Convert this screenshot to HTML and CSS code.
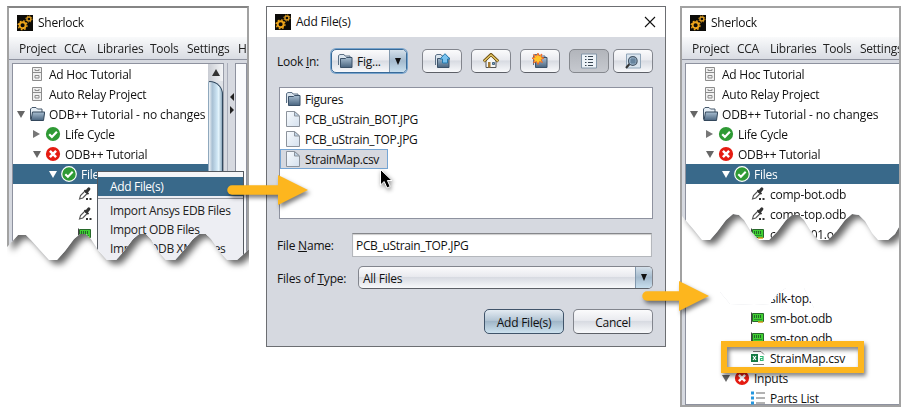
FILE: index.html
```html
<!DOCTYPE html>
<html lang="en">
<head>
<meta charset="utf-8">
<title>Sherlock - Add File(s)</title>
<link rel="stylesheet" href="styles.css">
</head>
<body>
<svg class="defs" aria-hidden="true">
  <defs>
    <linearGradient id="gf" x1="0" y1="0" x2="0" y2="1"><stop offset="0" stop-color="#a9bfd2"/><stop offset="1" stop-color="#49647f"/></linearGradient>
    <linearGradient id="gp" x1="0" y1="0" x2="1" y2="1"><stop offset="0" stop-color="#f8fbfe"/><stop offset="1" stop-color="#d5e1ee"/></linearGradient>
    <symbol id="gears" viewBox="0 0 16 16"><rect width="16" height="16" fill="#0c0b08"/><circle cx="5.6" cy="10.3" r="3" fill="none" stroke="#eda51b" stroke-width="1.9"/><circle cx="5.6" cy="10.3" r="4.4" fill="none" stroke="#eda51b" stroke-width="1.3" stroke-dasharray="1.7 1.75"/><circle cx="11.9" cy="4" r="2" fill="none" stroke="#d99a20" stroke-width="1.4"/><circle cx="11.9" cy="4" r="3.1" fill="none" stroke="#d99a20" stroke-width="1" stroke-dasharray="1.2 1.23"/></symbol>
    <symbol id="cabinet" viewBox="0 0 16 16"><path d="M3.5 1.5h9v13h-9z" fill="#f0f0f0" stroke="#8c8c8c"/><path d="M3.5 6.5h9M6 3v1.5h4V3M6 9.500h4v2.500H6z" fill="none" stroke="#8c8c8c"/></symbol>
    <symbol id="folder" viewBox="0 0 16 16"><path d="M1.500 13.500V3L3 1.500h4L8.500 3H13v3" fill="#e4edf5" stroke="#46586b"/><path d="M2 14.500L3.500 6h12.200L14.500 14.500z" fill="url(#gf)" stroke="#33475b"/></symbol>
    <symbol id="closed" viewBox="0 0 16 16"><path d="M1.500 12V2.500L3 1.500h4L8 3h5v2" fill="#dbe5ee" stroke="#5c7085"/><path d="M3.500 14.500v-9h5l1-1h5.500v10z" fill="url(#gf)" stroke="#3b5168"/></symbol>
    <symbol id="ok" viewBox="0 0 16 16"><circle cx="8" cy="8" r="7.100" fill="#2f9a35"/><path d="M4.200 8.200l2.700 2.700 5-5.200" fill="none" stroke="#fff" stroke-width="2.200"/></symbol>
    <symbol id="okring" viewBox="0 0 16 16"><circle cx="8" cy="8" r="7.300" fill="#2f9a35" stroke="#fff" stroke-width="1.200"/><path d="M4.300 8.200l2.600 2.600 4.800-5" fill="none" stroke="#fff" stroke-width="2"/></symbol>
    <symbol id="bad" viewBox="0 0 16 16"><circle cx="8" cy="8" r="7.100" fill="#e51c12"/><path d="M4.900 4.900l6.200 6.200M11.100 4.900l-6.200 6.200" stroke="#fff" stroke-width="2.500"/></symbol>
    <symbol id="picker" viewBox="0 0 16 16"><path d="M8.500 4.500L3.500 9.500 2.500 13l3.300-1L10.700 7" fill="#fff" stroke="#555" stroke-width="1.100"/><path d="M7.500 4.200l4 4" stroke="#333" stroke-width="1.800"/><path d="M9.500 5.800l2.300-2.800" stroke="#333" stroke-width="3.200" stroke-linecap="round"/><path d="M9 12h2v2H9zM12.500 12h2v2h-2z" fill="#333"/></symbol>
    <symbol id="board" viewBox="0 0 16 16"><path d="M1.500 14V2.500" stroke="#444"/><path d="M2.500 3.500h11v8h-11z" fill="#3fd032" stroke="#27682a"/><path d="M4.500 5v3M6.500 5v3M8.500 5v3M10.500 5v3" stroke="#24652b"/><path d="M4 9.500h8" stroke="#298c2b"/><path d="M8 12h5" stroke="#d5a61d" stroke-width="1.500"/></symbol>
    <symbol id="sheet" viewBox="0 0 16 16"><path d="M3 1.500h8l3 3M3 14.500h11" fill="none" stroke="#777"/><path d="M1 4h7v8H1z" fill="#147a43"/><path d="M3 6l3 4M6 6l-3 4" stroke="#fff" stroke-width="1.200"/><path d="M10 6.500h3v4h-2.500v-2H13" fill="none" stroke="#2eb872" stroke-width="1.200"/></symbol>
    <symbol id="parts" viewBox="0 0 16 16"><path d="M1 1.500h3v3H1zM1 6.500h3v3H1zM1 11.500h3v3H1z" fill="#2597df"/><path d="M6 3h9M6 8h9M6 13h9" stroke="#666"/></symbol>
    <symbol id="page" viewBox="0 0 16 16"><path d="M1.500 .5h8L14.500 5v10.500h-13z" fill="url(#gp)" stroke="#8c939c"/><path d="M9.500 .5V5h5z" fill="#c0d4e6" stroke="#8c939c"/></symbol>
  </defs>
</svg>
<main class="stage">
  <section class="app app-left">
    <div class="torn-shadow"><div class="torn torn-left">
      <header class="title"><svg><use href="#gears"/></svg>Sherlock</header>
      <nav class="menu"><span>Project</span><span>CCA</span><span>Libraries</span><span>Tools</span><span>Settings</span><span>H</span></nav>
      <div class="work">
        <div class="tree">
          <div class="row"><i></i><svg><use href="#cabinet"/></svg><span>Ad Hoc Tutorial</span></div>
          <div class="row"><i></i><svg><use href="#cabinet"/></svg><span>Auto Relay Project</span></div>
          <div class="row"><i class="open"></i><svg><use href="#folder"/></svg><span class="long">ODB++ Tutorial - no changes</span></div>
          <div class="row l1"><i class="shut"></i><svg><use href="#ok"/></svg><span>Life Cycle</span></div>
          <div class="row l1"><i class="open"></i><svg><use href="#bad"/></svg><span>ODB++ Tutorial</span></div>
          <div class="row l2 sel"><i class="open"></i><svg><use href="#okring"/></svg><span>Files</span></div>
          <div class="row l3"><i></i><svg><use href="#picker"/></svg></div>
          <div class="row l3"><i></i><svg><use href="#picker"/></svg></div>
          <div class="row l3"><i></i><svg><use href="#board"/></svg></div>
          <div class="row"></div>
        </div>
        <div class="scroll"><div class="up"><i></i></div><div class="thumb"></div></div>
        <div class="split"><i class="toleft"></i><i class="toright"></i></div>
        <div class="pane"></div>
      </div>
      <div class="popup">
        <div class="gap"></div><div class="item on">Add File(s)</div><hr>
        <div class="item">Import Ansys EDB Files</div><div class="item">Import ODB Files</div><div class="item">Import ODB XML Files</div>
      </div>
    </div></div>
  </section>

  <section class="dialog">
    <header class="title"><svg><use href="#gears"/></svg><span>Add File(s)</span><svg class="close" viewBox="0 0 10 10"><path d="M0 0l10 10M10 0L0 10" stroke="#111" stroke-width="1.100"/></svg></header>
    <div class="look">
      <label>Look <u>I</u>n:</label>
      <div class="combo small"><svg><use href="#closed"/></svg><span>Fig...</span><b><i></i></b></div>
      <button><svg viewBox="0 0 16 16"><use href="#closed"/><path d="M8.500 10V6H6L11 .7 16 6h-2.500v4z" fill="#79c2ef" stroke="#2478ac"/></svg></button>
      <button><svg viewBox="0 0 16 16"><path d="M3 8v6.500h10V8L8 3z" fill="#f5f6f5" stroke="#555"/><path d="M.7 8.500L8 1.500l7.300 7" fill="none" stroke="#705316" stroke-width="3"/><path d="M1 8.200L8 1.700l7 6.500" fill="none" stroke="#edce6b" stroke-width="1.200"/><path d="M5 9h2.500v5.500H5z" fill="#a67c34"/><path d="M9.500 9.500h2v2h-2z" fill="#79a5c6" stroke="#4a6780"/></svg></button>
      <button><svg viewBox="0 0 16 16"><use href="#closed"/><path d="M6 0l1 3 3-2-1 3 3 1-3 1.500 1.500 3-3-1L6 11.500 4.500 8.500l-3 1.500 1-3L0 5l3-.5L1.500 1.500l3 1.500z" fill="#ffc72a" stroke="#ee5a24" stroke-width=".8"/></svg></button>
      <button class="down"><svg viewBox="0 0 16 16"><path d="M.5 1h15v14H.5z" fill="#edf3f8" stroke="#8396a8"/><path d="M4 3.500h1.500M7 3.500h5M4 6.500h1.500M7 6.500h5M4 9.500h1.500M7 9.500h5M4 12.500h1.500M7 12.500h5" stroke="#384652"/></svg></button>
      <button class="near"><svg viewBox="0 0 16 16"><path d="M1.500 1h14v14h-14z" fill="#dae5ef" stroke="#91a6b9"/><path d="M4.500 11L1 15" stroke="#333" stroke-width="2"/><circle cx="7.800" cy="8" r="4.300" fill="#a5bfd5" stroke="#435465" stroke-width="1.200"/><path d="M5 7h6M5 9h6M7 5v6M9 5v6" stroke="#53708b"/></svg></button>
    </div>
    <div class="files">
      <div class="file"><svg><use href="#closed"/></svg><span>Figures</span></div>
      <div class="file"><svg><use href="#page"/></svg><span>PCB_uStrain_BOT.JPG</span></div>
      <div class="file"><svg><use href="#page"/></svg><span>PCB_uStrain_TOP.JPG</span></div>
      <div class="file picked"><svg><use href="#page"/></svg><span>StrainMap.csv</span></div>
    </div>
    <div class="line name"><label>File <u>N</u>ame:</label><div class="field">PCB_uStrain_TOP.JPG</div></div>
    <div class="line type"><label>Files of <u>T</u>ype:</label><div class="combo"><span>All Files</span><b><i></i></b></div></div>
    <footer><button class="primary">Add File(s)</button><button>Cancel</button></footer>
  </section>

  <section class="app app-right">
    <div class="torn-shadow"><div class="torn torn-right">
      <header class="title"><svg><use href="#gears"/></svg>Sherlock</header>
      <nav class="menu"><span>Project</span><span>CCA</span><span>Libraries</span><span>Tools</span><span>Settings</span></nav>
      <div class="work">
        <div class="tree">
          <div class="row"><i></i><svg><use href="#cabinet"/></svg><span>Ad Hoc Tutorial</span></div>
          <div class="row"><i></i><svg><use href="#cabinet"/></svg><span>Auto Relay Project</span></div>
          <div class="row"><i class="open"></i><svg><use href="#folder"/></svg><span class="long">ODB++ Tutorial - no changes</span></div>
          <div class="row l1"><i class="shut"></i><svg><use href="#ok"/></svg><span>Life Cycle</span></div>
          <div class="row l1"><i class="open"></i><svg><use href="#bad"/></svg><span>ODB++ Tutorial</span></div>
          <div class="row l2 sel"><i class="open"></i><svg><use href="#okring"/></svg><span>Files</span></div>
          <div class="row l3"><i></i><svg><use href="#picker"/></svg><span>comp-bot.odb</span></div>
          <div class="row l3"><i></i><svg><use href="#picker"/></svg><span>comp-top.odb</span></div>
          <div class="row l3"><i></i><svg><use href="#board"/></svg><span>comp-001.odb</span></div>
        </div>
      </div>
    </div></div>
    <div class="lower">
      <div class="tree">
        <div class="row l3"><i></i><svg><use href="#board"/></svg><span>silk-top.</span></div>
        <div class="row l3"><i></i><svg><use href="#board"/></svg><span>sm-bot.odb</span></div>
        <div class="row l3"><i></i><svg><use href="#board"/></svg><span>sm-top.odb</span></div>
        <div class="row l3"><i></i><svg><use href="#sheet"/></svg><span>StrainMap.csv</span></div>
        <div class="row l2"><i class="open"></i><svg><use href="#bad"/></svg><span>Inputs</span></div>
        <div class="row l3"><i></i><svg><use href="#parts"/></svg><span>Parts List</span></div>
      </div>
    </div>
  </section>

  <svg class="marks" viewBox="0 0 907 414">
    <g class="orange">
      <path d="M232 190h48" stroke-width="9.500" stroke-linecap="round"/><path class="head" d="M278 175v30l30-15z"/>
      <path d="M647 296h34" stroke-width="9.500" stroke-linecap="round"/><path class="head" d="M679 281v30l30-15z"/>
      <rect x="724" y="344" width="137" height="26" stroke-width="6"/>
    </g>
    <path class="cursor" d="M380.500 169.500v15.500l3.700-3.500 2.800 6.500 3.200-1.500-2.800-6h4.600z"/>
  </svg>
</main>
</body>
</html>
```
FILE: styles.css
```css
* { box-sizing: border-box; }
body { margin: 0; background: #fff; font: 12px/20px "Open Sans", "Noto Sans", sans-serif; letter-spacing: -0.25px; color: #111; overflow: hidden; }
.defs { position: absolute; width: 0; height: 0; }
svg { display: block; flex: none; width: 16px; height: 16px; }
.stage { position: relative; display: flex; align-items: flex-start; width: 907px; height: 414px; padding: 6px 0 0 7px; }
.app { position: relative; overflow: hidden; height: 401px; flex: none; }
.app-left { width: 242px; height: 270px; }
.app-right { width: 221px; margin-left: 14px; border: 2px solid #a2a2a2; }
.torn-shadow { filter: drop-shadow(5px 4px 3px rgba(0,0,0,.6)); }
.torn { position: relative; background: #d6d9e0; }
.torn-left { height: 256px; border: 2px solid #a2a2a2; border-top-color: #858585; border-bottom: 0;
  clip-path: polygon(0 0, 242px 0, 242px 243px, 238px 247px, 230px 254px, 220px 254px, 212px 245px, 204px 233px, 199px 228px, 192px 228px, 186px 233px, 177px 244px, 168px 254px, 159px 254px, 151px 245px, 144px 233px, 139px 228px, 132px 228px, 126px 233px, 117px 245px, 109px 254px, 100px 254px, 91px 244px, 84px 233px, 79px 228px, 73px 228px, 67px 233px, 58px 245px, 50px 254px, 42px 254px, 32px 243px, 24px 234px, 19px 229px, 11px 229px, 0 241px); }
.torn-right { height: 236px;
  clip-path: polygon(0 0, 217px 0, 217px 219px, 213px 226px, 206px 232px, 196px 232px, 190px 225px, 183px 213px, 177px 207px, 170px 206px, 163px 212px, 154px 224px, 146px 232px, 136px 232px, 128px 222px, 122px 212px, 117px 207px, 110px 207px, 104px 212px, 95px 224px, 87px 232px, 77px 232px, 68px 222px, 62px 212px, 57px 207px, 51px 206px, 44px 212px, 35px 224px, 28px 232px, 20px 232px, 12px 222px, 0 208px); }
.title { display: flex; align-items: center; gap: 5px; height: 30px; padding-left: 8px; background: #fff; }
.app .title { height: 29px; }
.menu { display: grid; grid-template-columns: 45px 33px 53px 37px 51px 20px; height: 23px; padding-left: 10px; background: linear-gradient(#f9fafb, #d9dce3); border-bottom: 1px solid #8e929f; white-space: nowrap; line-height: 24px; color: #222; }
.work { display: flex; height: 210px; padding: 3px 0 0 3px; }
.tree { flex: none; background: #fff; border: 1px solid #8e929f; border-right: 0; width: 196px; white-space: nowrap; }
.app-right .tree { width: 214px; }
.row { display: flex; align-items: center; height: 20px; padding-left: 2px; }
.row > i { flex: none; width: 12px; }
.row > svg { margin: 0 4px 0 2px; }
.row > span, .file > span { padding-top: 2px; }
.l1 { padding-left: 18px; } .l2 { padding-left: 34px; } .l3 { padding-left: 50px; }
.sel { background: #39698a; color: #fff; }
.row > i::before { content: ""; display: block; margin-left: 2px; width: 0; height: 0; }
.open::before { border: 4px solid transparent; border-top: 7px solid #666; border-bottom: 0; }
.sel .open::before { border-top-color: #fff; }
.shut::before { border: 4px solid transparent; border-left: 7px solid #777; border-right: 0; }
.row > .long { letter-spacing: -0.12px; }
.scroll { display: flex; flex-direction: column; width: 16px; background: #dfe2e7; border-top: 1px solid #8e929f; border-right: 1px solid #9a9eaa; }
.up { height: 17px; display: grid; place-items: center; background: linear-gradient(90deg, #c9ccd3, #f4f5f7); }
.up i { border: 4px solid transparent; border-bottom: 7px solid #333; border-top: 0; }
.thumb { flex: 1; border: 1px solid #31485e; border-left-color: #8fa8bd; border-radius: 2px 15px 0 0; background: linear-gradient(90deg, #eef3f7, #a8c0d3 25%, #cbe3f2 60%, #e5f5fc 75%, #8ba7bd); }
.split { display: flex; flex-direction: column; gap: 5px; width: 11px; padding: 30px 0 0 5px; border-left: 3px solid #d6d9e0; background: linear-gradient(90deg, #a9adba 1px, #d6d9e0 1px); }
.toleft { border: 4px solid transparent; border-right: 4px solid #222; border-left: 0; width: 0; margin-left: -2px; }
.toright { border: 4px solid transparent; border-left: 4px solid #222; border-right: 0; width: 0; margin-left: -2px; }
.pane { flex: 1; background: #fafbfd; border: 1px solid #8e929f; }
.popup { position: absolute; left: 88px; top: 163px; width: 147px; height: 110px; background: #edeef3; border: 1px solid #555a61; letter-spacing: -0.33px; }
.gap { height: 5px; background: #f5f6f8; }
.item { height: 19px; line-height: 20px; padding-left: 12px; color: #222; white-space: nowrap; }
.on { background: #39698a; color: #fff; }
.popup hr { margin: 2px 0 2px; border: 0; border-top: 1px solid #92959e; height: 1px; }
.dialog { flex: none; width: 400px; height: 341px; margin-left: 17px; background: #d6d9e0; border: 1px solid #6c6e72; }
.close { width: 10px; height: 10px; margin: 0 10px 0 auto; overflow: visible; }
.look { display: flex; align-items: center; padding: 12px 0 0 10px; }
.look label { width: 54px; padding-top: 2px; }
.look button { width: 40px; margin-right: 9px; flex: none; padding: 0 11px; }
.look .down { margin-right: 4px; background: linear-gradient(#b2b5bb, #c6c9cf); border-color: #85888e; }
.look .near { margin-right: 0; }
button, .combo { height: 24px; border: 1px solid #82858d; border-bottom-color: #5d6067; border-radius: 5px; background: linear-gradient(#fbfbfc, #e9eaef 45%, #d8dbe2 50%, #f8f9fb); font: inherit; letter-spacing: inherit; color: #111; padding: 0; }
.combo { display: flex; align-items: center; overflow: hidden; }
.combo span { padding-top: 2px; }
.combo b { align-self: stretch; width: 17px; margin-left: auto; display: grid; place-items: center; border-left: 1px solid #8298ad; background: linear-gradient(#d4e0ea, #a4bacd 50%, #c8dfee); }
.combo b i { border: 3.500px solid transparent; border-top: 7px solid #111; border-bottom: 0; }
.small { width: 76px; margin-right: 15px; padding-left: 5px; gap: 4px; border-color: #386a99; box-shadow: 0 0 0 1px #78a4cc; }
.files { width: 374px; height: 132px; margin: 14px 0 0 12px; padding-top: 1px; background: #fff; border: 1px solid #8e929f; }
.file { display: flex; align-items: center; gap: 4px; height: 20px; width: 108px; padding-left: 5px; white-space: nowrap; letter-spacing: -0.33px; }
.picked { background: #d6d9e0; border: 1px solid #75a5d4; padding-left: 4px; }
.line { display: flex; align-items: center; padding-left: 10px; }
.line label { padding-top: 2px; letter-spacing: -0.2px; }
.name { margin-top: 14px; } .type { margin-top: 9px; }
.name label { width: 75px; } .type label { width: 81px; }
.field { width: 300px; height: 24px; line-height: 24px; padding-left: 3px; background: #fff; border: 1px solid #b4b7bc; border-top-color: #85878b; box-shadow: inset 0 1px 1px #ccc; letter-spacing: -0.33px; }
.type .combo { width: 295px; height: 23px; padding-left: 4px; }
footer { display: flex; gap: 9px; justify-content: flex-end; padding: 20px 12px 0 0; }
footer button { width: 80px; height: 25px; padding-top: 2px; }
footer .primary { border-color: #40546a; background: linear-gradient(#e4ebf2, #b4c6d5 45%, #a0b6c8 50%, #cde2ef); }
.lower { display: flex; height: 117px; margin-top: 44px; padding-left: 3px; background: #d6d9e0;
  clip-path: polygon(0 20px, 14px 4px, 38px 4px, 48px 16px, 72px 17px, 88px 16px, 96px 5px, 104px 0, 122px 0, 128px 12px, 132px 20px, 217px 20px, 217px 117px, 0 117px); }
.lower .tree { border-top: 0; }
.marks { position: absolute; left: 0; top: 0; width: 907px; height: 414px; }
.orange { fill: none; stroke: #fdb61e; filter: drop-shadow(2px 3px 2px rgba(0,0,0,.5)); }
.head { fill: #fdb61e; stroke: none; }
.cursor { fill: #000; stroke: #fff; stroke-width: 1; filter: drop-shadow(1px 2px 2px rgba(0,0,0,.45)); }
```
